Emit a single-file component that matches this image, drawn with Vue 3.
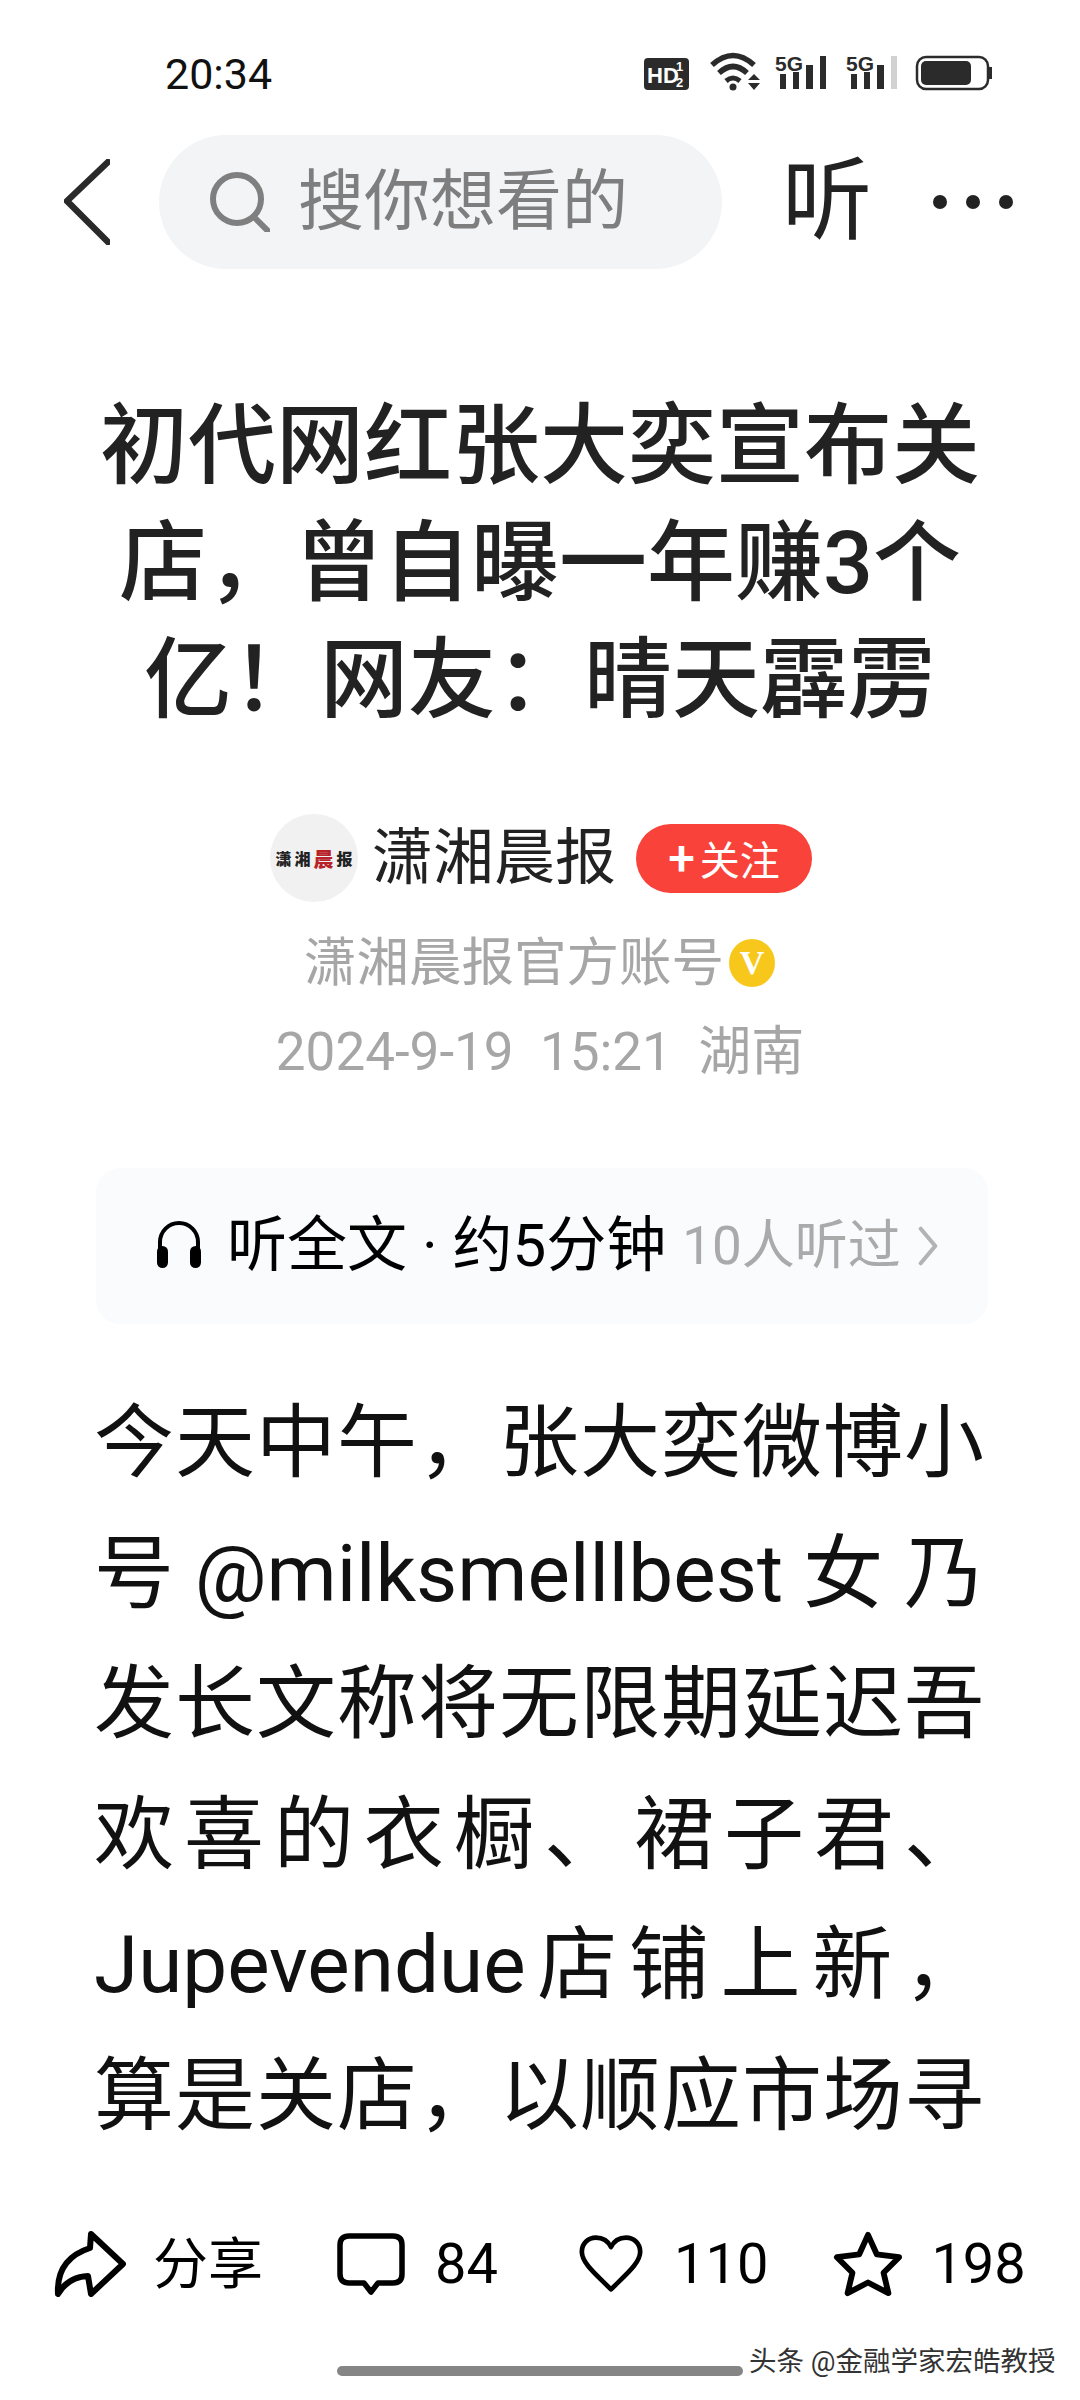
<script setup>
const lines = [
  '今天中午，张大奕微博小',
  '号 @milksmelllbest 女 乃',
  '发长文称将无限期延迟吾',
  '欢喜的衣橱、裙子君、',
  'Jupevendue店铺上新，',
  '算是关店，以顺应市场寻'
]
</script>

<template>
  <div class="page">
    <header class="status">
      <span class="time">20:34</span>
      <svg class="status-icons" viewBox="640 50 360 50" width="360" height="50">
        <rect x="644" y="58" width="45" height="32" rx="4" fill="#2b2b2b" />
        <text x="647" y="83" class="hd">HD</text>
        <text x="676" y="71" class="hd-small">1</text>
        <text x="676" y="87" class="hd-small">2</text>
        <path d="M712 65 Q733 46 754 65" fill="none" stroke="#2b2b2b" stroke-width="5.5" />
        <path d="M719 73 Q733 60 747 73" fill="none" stroke="#2b2b2b" stroke-width="5.5" />
        <path d="M726 81 Q733 75 740 81" fill="none" stroke="#2b2b2b" stroke-width="5" />
        <circle cx="733" cy="87" r="3.5" fill="#2b2b2b" />
        <path d="M748 80 L754 74 L760 80 Z M748 83 L760 83 L754 90 Z" fill="#2b2b2b" />
        <text x="775" y="71" class="g5">5G</text>
        <rect x="780" y="74" width="6" height="15" fill="#2b2b2b" />
        <rect x="793" y="72" width="6" height="17" fill="#2b2b2b" />
        <rect x="806" y="65" width="7" height="24" fill="#2b2b2b" />
        <rect x="820" y="56" width="6" height="33" fill="#2b2b2b" />
        <text x="846" y="71" class="g5">5G</text>
        <rect x="851" y="74" width="6" height="15" fill="#2b2b2b" />
        <rect x="864" y="72" width="6" height="17" fill="#2b2b2b" />
        <rect x="877" y="65" width="7" height="24" fill="#2b2b2b" />
        <rect x="891" y="56" width="6" height="33" fill="#d2d2d2" />
        <rect x="917" y="57" width="71" height="32" rx="9" fill="none" stroke="#2b2b2b" stroke-width="2.5" />
        <rect x="921" y="61" width="50" height="24" rx="5" fill="#2b2b2b" />
        <rect x="989" y="67" width="3" height="12" fill="#2b2b2b" />
      </svg>
    </header>

    <nav class="nav">
      <svg class="back" viewBox="0 0 46 86" width="46" height="86">
        <path d="M44 3 L3 42 L44 83" fill="none" stroke="#2a2a2a" stroke-width="6.5" stroke-linecap="round" stroke-linejoin="round" />
      </svg>
      <div class="search">
        <svg class="search-icon" viewBox="0 0 60 60" width="60" height="60">
          <circle cx="27" cy="27" r="24" fill="none" stroke="#7f7f7f" stroke-width="6" />
          <path d="M44 45 L58 59" stroke="#7f7f7f" stroke-width="6" stroke-linecap="round" />
        </svg>
        <span class="search-text">搜你想看的</span>
      </div>
      <span class="listen">听</span>
      <span class="dots"><i></i><i></i><i></i></span>
    </nav>

    <main class="article">
      <h1 class="title">初代网红张大奕宣布关店，曾自曝一年赚3个亿！网友：晴天霹雳</h1>

      <div class="author">
        <div class="avatar"><span>潇</span><span>湘</span><span class="red">晨</span><span>报</span></div>
        <span class="name">潇湘晨报</span>
        <span class="follow"><b>+</b>关注</span>
      </div>
      <div class="sub">潇湘晨报官方账号<span class="vip">V</span></div>
      <div class="date">2024-9-19&nbsp;&nbsp;15:21&nbsp;&nbsp;湖南</div>

      <div class="card">
        <svg class="phones" viewBox="0 0 46 48" width="46" height="48">
          <path d="M4 30 V22 A19 19 0 0 1 42 22 V30" fill="none" stroke="#000" stroke-width="4" />
          <rect x="1" y="26" width="11" height="22" rx="5.5" fill="#000" />
          <rect x="34" y="26" width="11" height="22" rx="5.5" fill="#000" />
        </svg>
        <span class="card-main">听全文 · 约5分钟</span>
        <span class="card-sub">10人听过</span>
        <svg class="card-arrow" viewBox="0 0 22 44" width="20" height="40">
          <path d="M3 3 L19 22 L3 41" fill="none" stroke="#b3b3b3" stroke-width="4.5" stroke-linecap="round" stroke-linejoin="round" />
        </svg>
      </div>

      <div class="body">
        <span v-for="line in lines" :key="line" class="line">{{ line }}</span>
      </div>
    </main>

    <footer class="actions">
      <div class="action share">
        <svg viewBox="0 0 72 66" width="72" height="66">
          <path d="M37 3 L69 33 L37 63 L34 45 Q14 46 4 63 Q2 28 36 17 Z" fill="none" stroke="#000" stroke-width="6" stroke-linejoin="round" />
        </svg>
        <span>分享</span>
      </div>
      <div class="action comment">
        <svg viewBox="0 0 68 62" width="68" height="62">
          <path d="M12 3 H56 Q65 3 65 12 V41 Q65 50 56 50 H41 L34 59 L27 50 H12 Q3 50 3 41 V12 Q3 3 12 3 Z" fill="none" stroke="#000" stroke-width="5.5" stroke-linejoin="round" />
        </svg>
        <span>84</span>
      </div>
      <div class="action heart">
        <svg viewBox="0 0 68 62" width="64" height="62">
          <path d="M34 58 C18 42 3 30 3 18 C3 9 10 3 18 3 C25 3 31 7 34 13 C37 7 43 3 50 3 C58 3 65 9 65 18 C65 30 50 42 34 58 Z" fill="none" stroke="#000" stroke-width="5" stroke-linejoin="round" />
        </svg>
        <span>110</span>
      </div>
      <div class="action star">
        <svg viewBox="0 0 72 68" width="70" height="68">
          <path d="M36 4 L45 24 L68 27 L52 43 L57 64 L36 53 L15 64 L20 43 L4 27 L27 24 Z" fill="none" stroke="#000" stroke-width="6" stroke-linejoin="round" />
        </svg>
        <span>198</span>
      </div>
    </footer>

    <div class="home"></div>
    <span class="watermark">头条 @金融学家宏皓教授</span>
  </div>
</template>

<style>
html, body { margin: 0; background: #fff; }
</style>

<style scoped>
.page {
  position: relative;
  width: 1080px;
  height: 2400px;
  overflow: hidden;
  display: flex;
  flex-direction: column;
  background: #fff;
  font-family: Roboto, "Noto Sans CJK SC", sans-serif;
  color: #111;
}
.status {
  height: 50px;
  margin-top: 50px;
  display: flex;
  align-items: center;
  justify-content: space-between;
  padding: 0 80px 0 165px;
  flex: none;
}
.time { font-size: 43px; line-height: 50px; color: #111; position: relative; top: -1px; }
.status-icons { display: block; }
.hd { font: 700 22px "Liberation Sans", sans-serif; fill: #fff; }
.hd-small { font: 700 13px "Liberation Sans", sans-serif; fill: #fff; }
.g5 { font: 700 21px "Liberation Sans", sans-serif; fill: #2b2b2b; }

.nav {
  height: 134px;
  margin-top: 35px;
  padding-left: 64px;
  display: flex;
  align-items: center;
  flex: none;
}
.back { flex: none; }
.search {
  width: 563px;
  height: 134px;
  margin-left: 49px;
  border-radius: 67px;
  background: #f3f4f6;
  display: flex;
  align-items: center;
  padding-left: 51px;
  box-sizing: border-box;
}
.search-text { margin-left: 28px; font-size: 66px; line-height: 134px; color: #7e7e7e; }
.listen { margin-left: 60px; font-size: 90px; line-height: 134px; color: #222; }
.dots { margin-left: 61px; display: flex; gap: 19px; }
.dots i { width: 14px; height: 14px; border-radius: 50%; background: #222; }

.article { flex: 1; min-height: 0; overflow: hidden; }
.title {
  margin: 118px 0 0;
  padding: 0 96px;
  font-size: 88px;
  line-height: 117px;
  font-weight: 500;
  text-align: center;
  color: #222;
}
.author {
  height: 88px;
  margin-top: 76px;
  padding-left: 270px;
  display: flex;
  align-items: center;
}
.avatar {
  width: 88px;
  height: 88px;
  border-radius: 50%;
  background: #f1f1f1;
  display: flex;
  align-items: center;
  justify-content: center;
  gap: 3px;
  font-size: 16px;
  font-weight: 900;
  color: #222;
}
.avatar .red { color: #b8232a; font-size: 20px; }
.name { margin-left: 14px; font-size: 61px; line-height: 88px; color: #222; }
.follow {
  margin-left: 20px;
  width: 176px;
  height: 69px;
  border-radius: 35px;
  background: #f9423a;
  color: #fff;
  font-size: 40px;
  display: flex;
  align-items: center;
  justify-content: center;
}
.follow b { font-size: 48px; font-weight: 500; line-height: 69px; margin-right: 5px; }
.sub {
  margin-top: 31px;
  height: 60px;
  padding-left: 304px;
  display: flex;
  align-items: center;
  font-size: 52.5px;
  line-height: 60px;
  color: #a6a6a6;
}
.vip {
  width: 46px;
  height: 48px;
  margin-left: 5px;
  border-radius: 50%;
  background: #f8c71c;
  color: #fff;
  font: 700 34px/48px "Liberation Serif", serif;
  text-align: center;
}
.date {
  margin-top: 29px;
  height: 60px;
  font-size: 53px;
  line-height: 60px;
  text-align: center;
  color: #a6a6a6;
}
.card {
  margin: 86px 0 0 96px;
  width: 892px;
  height: 156px;
  border-radius: 24px;
  background: #fafbfc;
  display: flex;
  align-items: center;
  padding-left: 60px;
  box-sizing: border-box;
}
.phones { flex: none; position: relative; top: -2px; }
.card-main { margin-left: 25px; font-size: 60px; line-height: 162px; color: #000; white-space: nowrap; }
.card-sub { margin-left: 16px; font-size: 53px; line-height: 162px; color: #aaa; white-space: nowrap; }
.card-arrow { margin-left: 17px; flex: none; }
.body { margin: 54px 0 0 94px; width: 890px; }
.line {
  display: block;
  font-size: 80px;
  line-height: 130.5px;
  color: #111;
  text-align: justify;
  text-align-last: justify;
  white-space: nowrap;
}

.actions {
  height: 68px;
  padding-left: 54px;
  display: flex;
  align-items: center;
  flex: none;
}
.action { display: flex; align-items: center; font-size: 56px; line-height: 68px; color: #000; }
.action svg { display: block; }
.share span { margin-left: 27px; font-size: 55px; }
.comment { margin-left: 74px; }
.comment span { margin-left: 30px; }
.heart { margin-left: 81px; }
.heart span { margin-left: 31px; }
.star { margin-left: 65px; }
.star span { margin-left: 28px; }

.home {
  width: 406px;
  height: 10px;
  margin: 68px 0 24px 337px;
  border-radius: 5px;
  background: #858585;
  flex: none;
}
.watermark {
  position: absolute;
  left: 749px;
  top: 2342px;
  font-size: 27.5px;
  line-height: 40px;
  color: #333;
  white-space: nowrap;
}
</style>
